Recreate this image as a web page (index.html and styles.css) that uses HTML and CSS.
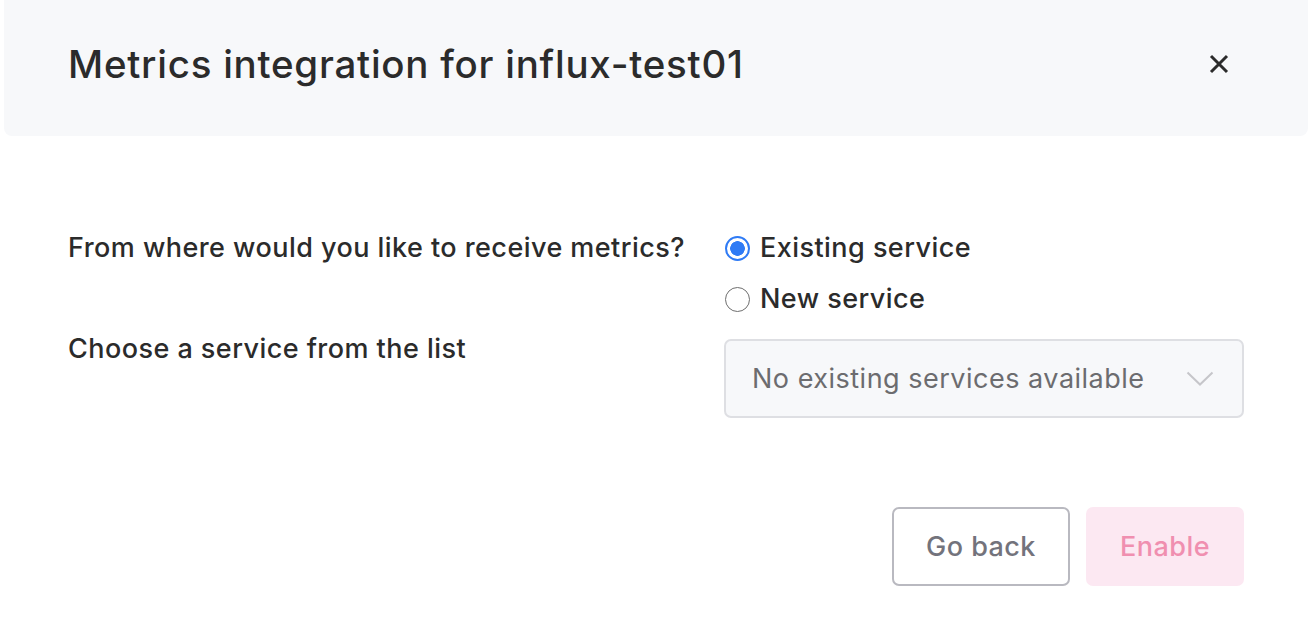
FILE: index.html
```html
<!DOCTYPE html>
<html>
<head>
<meta charset="utf-8">
<link rel="stylesheet" href="styles.css">
</head>
<body>
<div class="modal">
  <header class="modal-header">
    <h1 class="title">Metrics integration for influx-test01</h1>
    <button class="close" aria-label="Close">
      <svg width="20" height="20" viewBox="0 0 20 20"><path d="M2 2 L18 18 M18 2 L2 18" stroke="#2b2b2b" stroke-width="3" stroke-linecap="butt"/></svg>
    </button>
  </header>
  <section class="modal-body">
    <div class="row">
      <div class="label">From where would you like to receive metrics?</div>
      <div class="radios">
        <label class="radio"><span class="dot checked"></span>Existing service</label>
        <label class="radio"><span class="dot"></span>New service</label>
      </div>
    </div>
    <div class="row row-select">
      <div class="label">Choose a service from the list</div>
      <div class="select">
        <span>No existing services available</span>
        <svg width="28" height="16" viewBox="0 0 28 16"><path d="M1.5 1.5 L14 13.5 L26.5 1.5" fill="none" stroke="#c6c6ca" stroke-width="2"/></svg>
      </div>
    </div>
  </section>
  <footer class="modal-footer">
    <button class="btn btn-secondary">Go back</button>
    <button class="btn btn-primary" disabled>Enable</button>
  </footer>
</div>
</body>
</html>
```
FILE: styles.css
```css
* { box-sizing: border-box; }
html, body { margin: 0; padding: 0; background: #fff; }
body { font-family: Inter, "Noto Sans", sans-serif; color: #2b2b2b; width: 1312px; height: 630px; overflow: hidden; }
.modal { padding: 0 4px; }
.modal-header {
  background: #f7f8fa;
  height: 136px;
  border-radius: 0 0 8px 8px;
  display: flex;
  align-items: center;
  justify-content: space-between;
  padding: 0 64px 8px 64px;
}
.title { margin: 0; font-size: 38.5px; font-weight: 500; color: #2b2b2b; letter-spacing: 0.75px; line-height: 48px; }
.close { background: none; border: 0; padding: 0; display: flex; margin-right: 15px; }
.modal-body { padding: 96px 64px 0 64px; }
.row { display: grid; grid-template-columns: 656px 1fr; align-items: start; }
.label { font-size: 27px; font-weight: 500; color: #2b2b2b; letter-spacing: 0.45px; line-height: 32px; }
.radios { display: flex; flex-direction: column; gap: 19px; }
.radio { display: flex; align-items: center; gap: 11px; font-size: 27px; font-weight: 500; line-height: 32px; letter-spacing: 0.45px; }
.dot { width: 25px; height: 25px; margin-left: 1px; margin-right: -1px; border-radius: 50%; border: 1.5px solid #6e6e6e; background: #fff; flex: none; }
.dot.checked { border: 2px solid #2f7bf5; background: radial-gradient(circle, #2f7bf5 0 7px, #fff 7.6px); }
.row-select { margin-top: 24px; }
.row-select .label { line-height: 20px; }
.select {
  height: 79px;
  border: 2px solid #dedfe3;
  border-radius: 7px;
  background: #f7f8fa;
  display: flex;
  align-items: center;
  justify-content: space-between;
  padding: 0 28px 0 26px;
  font-size: 27px;
  letter-spacing: 0.5px;
  color: #6c6c6f;
}
.modal-footer { display: flex; justify-content: flex-end; gap: 16px; padding: 89px 64px 0 0; }
.btn { height: 79px; font-family: inherit; font-size: 27px; font-weight: 500; letter-spacing: 0.45px; border-radius: 7px; cursor: pointer; padding: 0; }
.btn-secondary { width: 178px; background: #fff; border: 2px solid #b9b9c0; color: #73737c; }
.btn-primary { width: 158px; background: #fce8f2; border: 0; color: #f08fb0; }
```
